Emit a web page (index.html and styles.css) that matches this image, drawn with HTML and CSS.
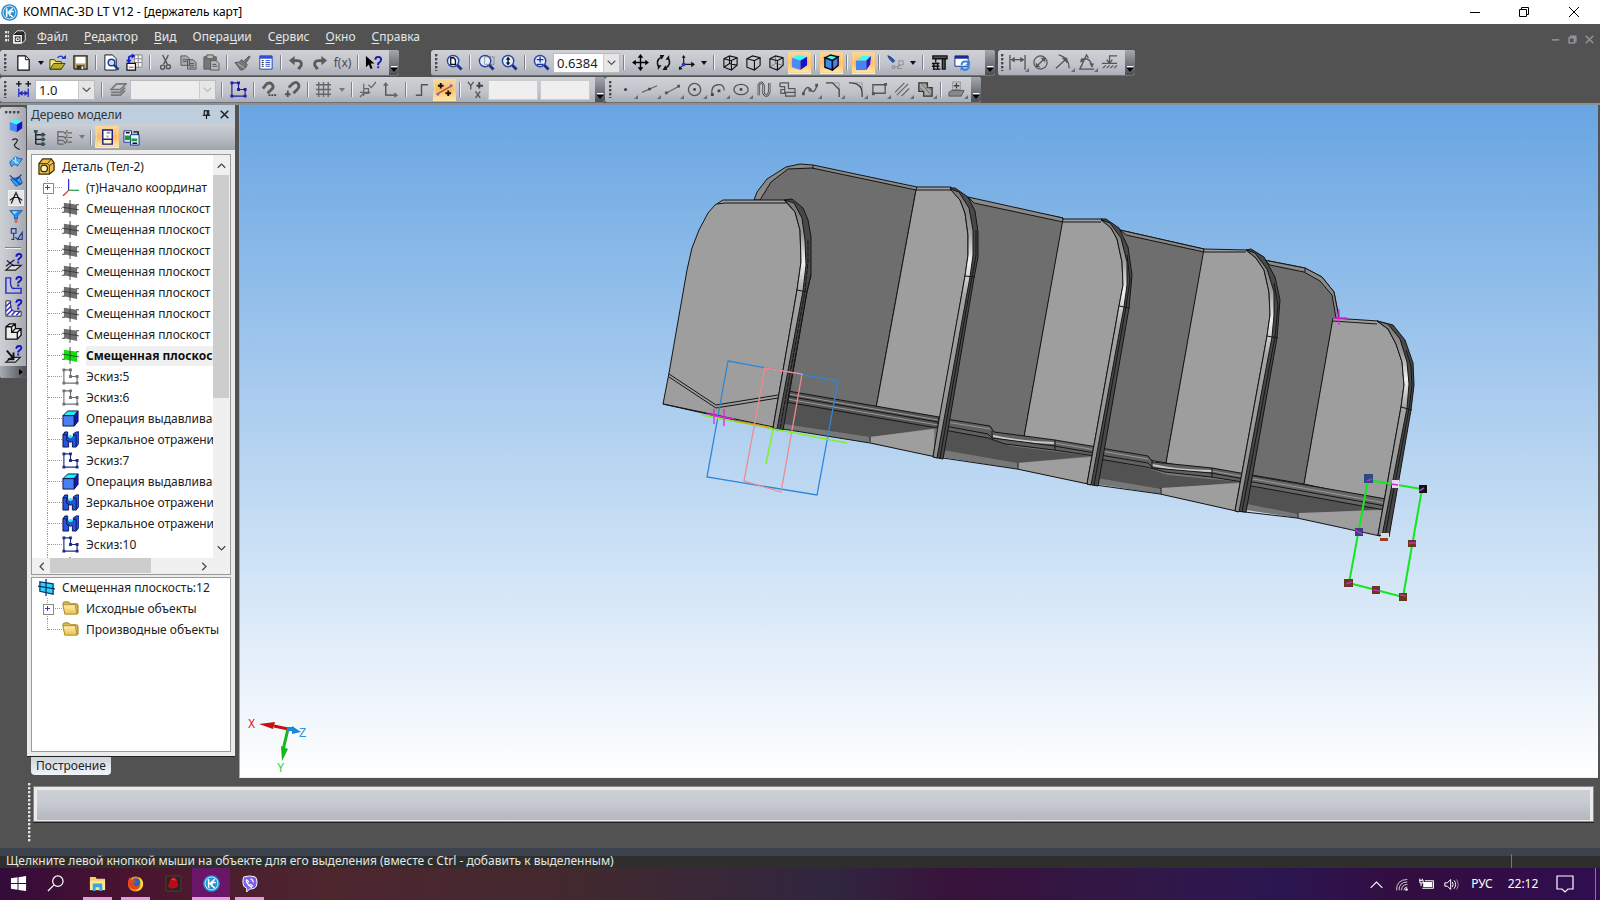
FILE: index.html
```html
<!DOCTYPE html>
<html lang="ru">
<head>
<meta charset="utf-8">
<title>КОМПАС-3D LT V12 - [держатель карт]</title>
<link rel="stylesheet" href="styles.css">
</head>
<body>
<svg class="defs" aria-hidden="true">
<defs>
<linearGradient id="g-rim" x1="0" y1="0" x2="0" y2="1"><stop offset="0" stop-color="#777"/><stop offset=".15" stop-color="#999"/><stop offset=".27" stop-color="#f2f2f2"/><stop offset=".4" stop-color="#a5a5a5"/><stop offset="1" stop-color="#8c8c8c"/></linearGradient>
<linearGradient id="g-folder" x1="0" y1="0" x2="0" y2="1"><stop offset="0" stop-color="#fff2b0"/><stop offset="1" stop-color="#e8bf4f"/></linearGradient>
<g id="lens"><path d="M11.500 11.500l5 5" stroke="#1b2f94" stroke-width="3"/><circle cx="7.500" cy="7.500" r="6" fill="#dff0fb" stroke="#2c43a8" stroke-width="1.500"/></g>
</defs>
<symbol id="i-kompas" viewBox="0 0 18 18"><circle cx="9" cy="9" r="8.800" fill="#2b8fd3"/><circle cx="9" cy="9" r="6.800" fill="none" stroke="#d8ecfa" stroke-width="1"/><path d="M6 4.500v9M12.500 4.500L7.500 9M7 8.500l5.500 5.500M9.500 8h4M9.500 8v4.500" stroke="#fff" stroke-width="1.700" fill="none"/></symbol>
<symbol id="i-part" viewBox="0 0 18 18"><path d="M3 6l4-4h7l2 3v8l-4 3H3z" fill="#333" stroke="#eee"/><path d="M3 6h9v10M12 6l3-3" stroke="#111" fill="none"/><rect x="3.500" y="7.500" width="8" height="8" fill="#333" stroke="#fff" stroke-width="1.500"/><circle cx="7.500" cy="11.500" r="1.700" fill="none" stroke="#fff" stroke-width="1.300"/></symbol>
<symbol id="i-new" viewBox="0 0 18 18"><path d="M3 2h8l4 4v11H3z" fill="#fff" stroke="#111" stroke-width="1.300"/><path d="M11 2v4h4" fill="#ddd" stroke="#111"/></symbol>
<symbol id="i-open" viewBox="0 0 18 18"><path d="M1 16V6h5l1 2h6v8z" fill="#ffee75" stroke="#3b3b05"/><path d="M1 16l4-6h12l-4 6z" fill="#b8ae31" stroke="#3b3b05"/><path d="M9 4q4-4 7 1" fill="none" stroke="#1638c8" stroke-width="1.500"/><path d="M13 5h5V1z" fill="#1638c8"/></symbol>
<symbol id="i-save" viewBox="0 0 18 18"><path d="M2 2h14v14H3l-1-1z" fill="#b5a265" stroke="#222" stroke-width="1.300"/><path d="M4 3h10v7H4z" fill="#fff"/><path d="M5 12h8v4H5z" fill="#333"/><path d="M10 13h2v3h-2z" fill="#eee"/></symbol>
<symbol id="i-preview" viewBox="0 0 18 18"><path d="M2 1h8l4 4v12H2z" fill="#fff" stroke="#111"/><circle cx="9" cy="9" r="3.500" fill="#cde" stroke="#173a9c" stroke-width="1.500"/><path d="M11.500 11.500l5 5" stroke="#173a9c" stroke-width="2.500"/></symbol>
<symbol id="i-insert" viewBox="0 0 18 18"><path d="M9 1h8v13H9zM13 1v13M9 5h8M9 9h8" fill="#f4f4f4" stroke="#888"/><path d="M1 10h9v7H1z" fill="#fff" stroke="#111" stroke-width="1.300"/><path d="M3 14h5" stroke="#d22"/><path d="M3 9V4q0-2 4-2" stroke="#1a22d0" stroke-width="2" fill="none"/><path d="M6-1l4 3-4 3zM0 6h6L3 10z" fill="#1a22d0"/></symbol>
<symbol id="i-cut" viewBox="0 0 18 18"><path d="M6 1l5 10M12 1L7 11" stroke="#555" stroke-width="1.500"/><circle cx="6" cy="14" r="2.200" fill="none" stroke="#555" stroke-width="1.500"/><circle cx="12" cy="13.500" r="2.200" fill="none" stroke="#555" stroke-width="1.500"/></symbol>
<symbol id="i-copy" viewBox="0 0 18 18"><path d="M1 2h6l3 3v7H1zM8 6h6l3 3v7H8z" fill="#a9abb0" stroke="#555"/><path d="M3 6h5M3 8h4M10 10h5M10 12h5M10 14h5" stroke="#555"/></symbol>
<symbol id="i-paste" viewBox="0 0 18 18"><path d="M1 3h13v13H1z" fill="#777" stroke="#555"/><path d="M4 1h7v4H4z" fill="#bbb" stroke="#555"/><path d="M8 7h6l3 3v7H8z" fill="#b5b7bb" stroke="#555"/><path d="M10 11h4M10 13h5" stroke="#555"/></symbol>
<symbol id="i-brush" viewBox="0 0 18 18"><path d="M11 7l5-5 1 1-4 6z" fill="#777" stroke="#555"/><path d="M1 9q6 0 7-3l6 5q-2 6-7 6z" fill="#777" stroke="#555"/><path d="M4 10l7 5" stroke="#bbb"/></symbol>
<symbol id="i-props" viewBox="0 0 18 18"><path d="M3 2h13v14H3z" fill="#fff" stroke="#1f3bb0"/><path d="M3 2h13v3H3z" fill="#2d50d8"/><path d="M5 7h2M5 9h2M5 11h2M5 13h2" stroke="#111"/><path d="M9 7h5M9 9h5M9 11h5M9 13h5" stroke="#2d50d8"/></symbol>
<symbol id="i-undo" viewBox="0 0 18 18"><path d="M5 7h5q5 0 4 5l-3 4" fill="none" stroke="#5a5a5a" stroke-width="3"/><path d="M1 7l6-5v10z" fill="#5a5a5a"/></symbol>
<symbol id="i-redo" viewBox="0 0 18 18"><path d="M13 7H8Q3 7 4 12l3 4" fill="none" stroke="#5a5a5a" stroke-width="3"/><path d="M17 7l-6-5v10z" fill="#5a5a5a"/></symbol>
<symbol id="i-help" viewBox="0 0 18 18"><path d="M1 2v12l3-3 2 5 2-1-2-5h4z" fill="#000"/><path d="M11 6q0-3 3-3t3 3q0 2-3 4v2" fill="none" stroke="#1717a0" stroke-width="2"/><path d="M13 13h2v2h-2z" fill="#1717a0"/></symbol>
<symbol id="i-zpage" viewBox="0 0 18 18"><use href="#lens"/><path d="M5 4h3l2 2v5H5z" fill="#fff" stroke="#111" stroke-width="1.400"/></symbol>
<symbol id="i-zwin" viewBox="0 0 18 18"><use href="#lens"/><path d="M7 3h10v8H7z" fill="none" stroke="#555" stroke-dasharray="1 1"/></symbol>
<symbol id="i-zfit" viewBox="0 0 18 18"><use href="#lens"/><path d="M7.500 4v7" stroke="#111" stroke-width="1.500"/><path d="M5 6l2.500-3L10 6zM5 9l2.500 3L10 9z" fill="#111"/></symbol>
<symbol id="i-zpm" viewBox="0 0 18 18"><use href="#lens"/><path d="M4 6h7M7.500 3v6M4 11h7" stroke="#1b2f94" stroke-width="1.400"/></symbol>
<symbol id="i-move" viewBox="0 0 18 18"><path d="M9 3v12M3 9h12" stroke="#000" stroke-width="1.500"/><path d="M6 4l3-4 3 4zM6 14l3 4 3-4zM4 6L0 9l4 3zM14 6l4 3-4 3z"/></symbol>
<symbol id="i-rot" viewBox="0 0 18 18"><path d="M4 14Q0 7 7 3M14 4q4 7-3 11" fill="none" stroke="#111" stroke-width="1.700"/><path d="M5 1h5L7 6zM13 17H8l3-5zM15 1v5h-4zM3 17v-5h4z" fill="#111"/></symbol>
<symbol id="i-axes" viewBox="0 0 18 18"><path d="M6 11V3M6 11h10M6 11l-4 4" stroke="#111" stroke-width="1.200"/><path d="M4 4l2-3 2 3zM14 8l4 3-4 3zM1 17v-4l4 3z" fill="#111"/><circle cx="6" cy="11" r="2" fill="#23d"/></symbol>
<symbol id="i-wire" viewBox="0 0 18 18"><path d="M2 5l6-3 8 2v8l-6 5-8-3zM2 5l8 2v10M10 7l6-3M8 2v8l8 2M8 10l-6 4" fill="none" stroke="#111" stroke-width="1.200"/></symbol>
<symbol id="i-hid" viewBox="0 0 18 18"><path d="M2 5l6-3 8 2v8l-6 5-8-3zM2 5l8 2v10M10 7l6-3" fill="none" stroke="#111" stroke-width="1.200"/></symbol>
<symbol id="i-hid2" viewBox="0 0 18 18"><path d="M8 2v8l8 2M8 10l-6 4" fill="none" stroke="#777"/><path d="M2 5l6-3 8 2v8l-6 5-8-3zM2 5l8 2v10M10 7l6-3" fill="none" stroke="#111" stroke-width="1.200"/></symbol>
<symbol id="i-shade" viewBox="0 0 18 18"><path d="M1 4l7-3 9 2-7 4z" fill="#3ff"/><path d="M1 4l9 3v10l-9-3z" fill="#4a8cf5"/><path d="M10 7l7-4v9l-7 5z" fill="#1414c8"/></symbol>
<symbol id="i-edges" viewBox="0 0 18 18"><g stroke="#0a0a20" stroke-width="1.500"><path d="M2 4l6-3 8 2-6 4z" fill="#3fe"/><path d="M2 4l8 3v10l-8-3z" fill="#3d8ceb"/><path d="M10 7l6-4v9l-6 5z" fill="#4b7fe0"/></g></symbol>
<symbol id="i-persp" viewBox="0 0 18 18"><path d="M1 7l7-5h9l-5 5z" fill="#3ff"/><path d="M1 7h11v10H1z" fill="#4a82f5"/><path d="M12 7l5-5-1 9-4 6z" fill="#1518d8"/></symbol>
<symbol id="i-dep" viewBox="0 0 20 18"><path d="M1 1l4 2 4 4-2 2-4-4z" fill="#1b5cc0" stroke="#0d3470"/><path d="M14 7h5v5h-5zM6 13h3v3H6zM9 14h4l2-3M15 12l-3 4h6" fill="none" stroke="#888"/></symbol>
<symbol id="i-lib" viewBox="0 0 18 18"><path d="M2 2h15v3H2zM12 5h3v11h-3zM5 5v4" stroke="#111" fill="#555" stroke-width="1.400"/><path d="M1 10h8M1 13h8M2 16h8M3 9v8M7 9v8" stroke="#111" stroke-width="1.500"/></symbol>
<symbol id="i-refresh" viewBox="0 0 18 18"><path d="M1 2h14v11H1z" fill="#fff" stroke="#1a2a90"/><path d="M1 2h14v3H1z" fill="#1a2a90"/><path d="M8 12q0-4 4-4t4 2M16 13q-1 4-5 4l-3-2" stroke="#2e86e8" stroke-width="2" fill="none"/><path d="M17 7v5h-5zM7 18v-5h4z" fill="#2e86e8"/></symbol>
<symbol id="i-dim" viewBox="0 0 18 18"><path d="M1 1v16M17 1v16M2 6h14" stroke="#555" stroke-width="1.400"/><path d="M2 6l4-3v6zM16 6l-4-3v6z" fill="#555"/></symbol>
<symbol id="i-diam" viewBox="0 0 18 18"><circle cx="9" cy="9" r="7" fill="none" stroke="#555" stroke-width="1.300"/><path d="M5 13l8-8" stroke="#555" stroke-width="1.300"/><path d="M14 4v5L9 4zM4 14V9l5 5z" fill="#555"/></symbol>
<symbol id="i-rad" viewBox="0 0 18 18"><path d="M4 1q11 3 11 14M1 15L11 6" fill="none" stroke="#555" stroke-width="1.400"/><path d="M13 4v6L7 4z" fill="#555"/></symbol>
<symbol id="i-ang" viewBox="0 0 18 18"><path d="M1 16h16M2 16L9 1l2 3M3 6q10-4 12 8" fill="none" stroke="#555" stroke-width="1.400"/><path d="M6 8l-4 1 2-5zM12 10l5 0-2 4z" fill="#555"/></symbol>
<symbol id="i-lvl" viewBox="0 0 18 18"><path d="M1 10h16M9 10V2h8M6 6l3 4 3-4M2 15l3-3M6 15l3-3M10 15l3-3M14 15l3-3" fill="none" stroke="#555" stroke-width="1.300"/></symbol>
<symbol id="i-step" viewBox="0 0 18 18"><path d="M4 0v6M1 3h6M14 0v6M11 3h6" stroke="#111" stroke-width="1.400"/><path d="M4 8v9M14 8v9M5 13h8" stroke="#2326c8" stroke-width="1.400"/><path d="M4 13l4-3v6zM14 13l-4-3v6z" fill="#2326c8"/></symbol>
<symbol id="i-layers" viewBox="0 0 18 18"><path d="M1 15h10l5-5M1 12h10l5-5M1 9h10l6-6H7z" fill="none" stroke="#777" stroke-width="1.700"/></symbol>
<symbol id="i-sketch" viewBox="0 0 18 18"><path d="M2 2h7v7h7v7H2z" fill="none" stroke="currentColor" stroke-width="1.200"/><path d="M.5.500h3v3h-3zM7.500.500h3v3h-3zM7.500 7.500h3v3h-3zM14.500 7.500h3v3h-3zM14.500 14.500h3v3h-3zM.5 14.500h3v3h-3z" fill="currentColor"/></symbol>
<symbol id="i-snap" viewBox="0 0 18 18"><path d="M2 8l4-5q4-2 6 1 2 3-1 5l-4 4" fill="none" stroke="#5c5c5c" stroke-width="3"/><path d="M11 15h2M14 15h2M8 15h2" stroke="#444" stroke-width="2"/></symbol>
<symbol id="i-mag" viewBox="0 0 18 18"><path d="M5 7l4-4q4-3 6 0 2 3-1 6l-4 4" fill="none" stroke="#5c5c5c" stroke-width="3"/><path d="M4 10v7M1 14h6" stroke="#555" stroke-width="2"/></symbol>
<symbol id="i-grid" viewBox="0 0 18 18"><path d="M4 1v16M9 1v16M14 1v16M1 4h16M1 9h16M1 14h16" stroke="#666" stroke-width="1.400"/></symbol>
<symbol id="i-orth" viewBox="0 0 18 18"><path d="M5 3v13M1 12h11M1 17l5-5M5 8h5v5H5M10 4l3 3 5-6" fill="none" stroke="#666" stroke-width="1.300"/></symbol>
<symbol id="i-lcs" viewBox="0 0 18 18"><path d="M4 4v11h11" fill="none" stroke="#444" stroke-width="1.300"/><path d="M1 5l3-4 3 4zM13 12l4 3-4 3z" fill="#666"/></symbol>
<symbol id="i-ort" viewBox="0 0 18 18"><path d="M3 15h6V4h7" fill="none" stroke="#555" stroke-width="1.500"/></symbol>
<symbol id="i-round" viewBox="0 0 18 18"><path d="M1 14l16-9" stroke="#a55a4a" stroke-width="1.500"/><path d="M5 2v6M2 5h6M13 10v6M10 13h6" stroke="#111" stroke-width="2"/><circle cx="2" cy="14" r="1.500" fill="#86a"/><circle cx="16" cy="5" r="1.500" fill="#86a"/></symbol>
<symbol id="i-xy" viewBox="0 0 18 18"><path d="M1 1l3 4 3-4M4 5v4M9 11l5 7M14 11l-5 7" fill="none" stroke="#555" stroke-width="1.400"/><path d="M13 1v7M10 5h7" stroke="#444" stroke-width="2"/></symbol>
<symbol id="i-pt" viewBox="0 0 18 18"><circle cx="8" cy="9" r="1.700" fill="#444"/></symbol>
<symbol id="i-ln" viewBox="0 0 18 18"><path d="M1 12l16-7" stroke="#666" stroke-width="1.300"/><circle cx="9" cy="8.500" r="1.600" fill="#444"/></symbol>
<symbol id="i-seg" viewBox="0 0 18 18"><path d="M2 13l13-7" stroke="#666" stroke-width="1.300"/><path d="M1 11h3v3H1zM14 4h3v3h-3z" fill="#555"/></symbol>
<symbol id="i-circ" viewBox="0 0 18 18"><circle cx="8" cy="9" r="6.500" fill="none" stroke="#555" stroke-width="1.400"/><circle cx="8" cy="9" r="1.500" fill="#444"/></symbol>
<symbol id="i-arc" viewBox="0 0 18 18"><path d="M2 14Q1 5 8 4t7 6" fill="none" stroke="#555" stroke-width="1.400"/><path d="M1 13h3v3H1zM8 9h3v3H8z" fill="#444"/></symbol>
<symbol id="i-ell" viewBox="0 0 18 18"><ellipse cx="8.500" cy="9" rx="7.500" ry="5.500" fill="none" stroke="#555" stroke-width="1.400"/><circle cx="8.500" cy="9" r="1.500" fill="#444"/></symbol>
<symbol id="i-nurb" viewBox="0 0 18 18"><path d="M3 15V4q3-5 5 1v8q3 6 6-1V2" fill="none" stroke="#444" stroke-width="2.600"/><path d="M3 15V4q3-5 5 1v8q3 6 6-1V2" fill="none" stroke="#ccc" stroke-width=".9"/></symbol>
<symbol id="i-multi" viewBox="0 0 18 18"><path d="M1 2h9v6h7M1 6h5v6h11M1 2v4M6 9H2v4h5v3h10v-8" fill="none" stroke="#555" stroke-width="1.300"/></symbol>
<symbol id="i-spl" viewBox="0 0 18 18"><path d="M1 14q4-11 8-5t7-5" fill="none" stroke="#555" stroke-width="1.400"/><path d="M0 12h3v3H0zM7 8h3v3H7zM14 3h3v3h-3z" fill="#555"/></symbol>
<symbol id="i-cham" viewBox="0 0 18 18"><path d="M1 2h7l7 7v8" fill="none" stroke="#444" stroke-width="1.400"/><path d="M8 2h7v7" fill="none" stroke="#666" stroke-dasharray="1 1"/></symbol>
<symbol id="i-fil" viewBox="0 0 18 18"><path d="M1 2h3q11 1 11 11v4" fill="none" stroke="#444" stroke-width="1.400"/><path d="M6 2h9v7" fill="none" stroke="#666" stroke-dasharray="1 1"/></symbol>
<symbol id="i-rect" viewBox="0 0 18 18"><path d="M2 4h13v9H2z" fill="none" stroke="#555" stroke-width="1.400"/><path d="M1 12h3v3H1zM14 2h3v3h-3z" fill="#555"/></symbol>
<symbol id="i-hatch" viewBox="0 0 18 18"><path d="M1 12L11 2M3 15L15 3M8 16l8-8" stroke="#666" stroke-width="1.300"/></symbol>
<symbol id="i-eq" viewBox="0 0 18 18"><path d="M2 2h9v5h5v9H7v-5H2z" fill="#aaa" stroke="#333" stroke-width="1.400"/><path d="M2 6l5 5M5 3l10 12M8 2l8 9M7 14l2 2" stroke="#666"/></symbol>
<symbol id="i-proj" viewBox="0 0 18 18"><path d="M1 12l3-2h13l-3 6H1z" fill="#888" stroke="#555"/><path d="M5 1h8v8H5z" fill="none" stroke="#555" stroke-dasharray="1 1"/><path d="M9 2v6M6 5h6" stroke="#444" stroke-width="1.400"/></symbol>
<symbol id="i-curve" viewBox="0 0 18 18"><path d="M4 4q4-3 7 0-1 3-4 6 0 4 7 6" fill="none" stroke="#222" stroke-width="1.500"/></symbol>
<symbol id="i-surf" viewBox="0 0 18 18"><path d="M1 9l7-7 4 2 5 1-6 9-4-2-4 3z" fill="#4aa8ee" stroke="#1a4ca8"/><path d="M8 2l1 9M4 6l9 5" stroke="#dff"/></symbol>
<symbol id="i-surf2" viewBox="0 0 18 18"><path d="M2 8l7 9 8-4-3-8z" fill="#35a0ee" stroke="#1438a0"/><path d="M1 3l14 12M8 10l8-8" stroke="#1438a0" stroke-width="1.500"/></symbol>
<symbol id="i-compass" viewBox="0 0 18 18"><path d="M9 1v3M3 16L8 4h2l5 12M1 12q8-8 16 0" fill="none" stroke="#111" stroke-width="1.500"/></symbol>
<symbol id="i-filter" viewBox="0 0 18 18"><path d="M1 2h16l-6 7v4H7V9z" fill="#258fe8" stroke="#1a52a8"/><path d="M4 3h7l-4 4z" fill="#9df"/><circle cx="9" cy="16" r="1.800" fill="#e5552a"/></symbol>
<symbol id="i-spec" viewBox="0 0 18 18"><path d="M3 2h6v6H3zM6 8v8M3 16h4M8 13l3 3 6-9v9h-6" fill="none" stroke="#1c3c90" stroke-width="1.500"/></symbol>
<symbol id="i-q1" viewBox="0 0 20 20"><path d="M2 18h10l6-5H8z" fill="#ddd" stroke="#222" stroke-width="1.300"/><path d="M3 8l8 6M2 14l9-7" stroke="#1a1a50" stroke-width="1.300"/><path d="M13 4q0-3 3-3t2 3l-3 3v1M14 10h2" fill="none" stroke="#1516c0" stroke-width="2"/></symbol>
<symbol id="i-q2" viewBox="0 0 20 20"><path d="M2 2h5q-1 12 4 11h7v5H2z" fill="none" stroke="#2a2ac8" stroke-width="1.500"/><path d="M13 4q0-3 3-3t2 3l-3 3v1M14 10h2" fill="none" stroke="#1516c0" stroke-width="2"/></symbol>
<symbol id="i-q3" viewBox="0 0 20 20"><path d="M2 2h5q-1 11 4 11h7v5H2z" fill="#fff" stroke="#222"/><path d="M2 8l5-5M2 13l6-6M3 17l6-6M8 17l4-4M13 17l4-4" stroke="#2a2ac8" stroke-width="1.500"/><path d="M13 4q0-3 3-3t2 3l-3 3v1M14 10h2" fill="none" stroke="#1516c0" stroke-width="2"/></symbol>
<symbol id="i-solid" viewBox="0 0 20 20"><path d="M2 5l4-3h6v5h6v7l-4 4H2zM2 5h6v6h6v7M8 5l4-3M8 11l4-4M14 11l4-4" fill="#eee" stroke="#111" stroke-width="1.400"/></symbol>
<symbol id="i-q4" viewBox="0 0 20 20"><path d="M2 18h10l5-5H8z" fill="#ddd" stroke="#222" stroke-width="1.300"/><path d="M3 6l7 8M10 8v7H4" stroke="#111" stroke-width="2" fill="none"/><path d="M13 4q0-3 3-3t2 3l-3 3v1M14 10h2" fill="none" stroke="#1516c0" stroke-width="2"/></symbol>
<symbol id="i-tree" viewBox="0 0 18 18"><path d="M4 2v14M4 6h6M4 11h6M4 16h6M10 6h4M10 11h4M10 16h4" stroke="#222" stroke-width="1.500"/><path d="M2 1h4v3H2zM10 4h3v4h-3zM10 9h3v4h-3zM10 14h3v4h-3z" fill="#355"/></symbol>
<symbol id="i-list" viewBox="0 0 18 18"><path d="M2 2v14M2 3h6M2 8h6M2 12h6M2 16h6M12 4h5M12 9h5M12 14h5M8 3l2 2 2-4M8 8l2 2 2-4M8 13l2 2 2-4" fill="none" stroke="#666" stroke-width="1.300"/></symbol>
<symbol id="i-doc" viewBox="0 0 18 18"><path d="M4 1h10v10H4z" fill="#fff" stroke="#1a1a80" stroke-width="1.500"/><path d="M4 11h10v5H4z" fill="#fff6d0" stroke="#1a1a80" stroke-width="1.500"/><path d="M8 3h4v2H8zM8 7h2v2H8z" fill="#999"/></symbol>
<symbol id="i-docs" viewBox="0 0 18 18"><path d="M1 2h8v12H1z" fill="#fff" stroke="#1a2a90"/><path d="M8 6h9v11H8z" fill="#dff" stroke="#1a2a90"/><path d="M2 7h6v5H2zM9 10h6v3H9z" fill="#1d9a3a"/><path d="M11 3h5v3M3 4h4M10 15h5" stroke="#111" stroke-width="1.500" fill="none"/></symbol>
<symbol id="i-root" viewBox="0 0 18 18"><path d="M1 6l4-5h9l3 4v8l-5 4H1z" fill="#f2c04b" stroke="#3a2a05" stroke-width="1.300"/><path d="M1 6h9l2 2v9M10 6l4-5M12 8l5-3" fill="none" stroke="#3a2a05"/><circle cx="6.500" cy="11" r="3.500" fill="#fff3c0" stroke="#3a2a05" stroke-width="1.300"/></symbol>
<symbol id="i-origin" viewBox="0 0 18 18"><path d="M7 12V0" stroke="#33c" stroke-width="1.300"/><path d="M7 12h11" stroke="#2a9a50" stroke-width="1.300"/><path d="M7 12l-6 6" stroke="#c33" stroke-width="1.300"/></symbol>
<symbol id="i-plane" viewBox="0 0 18 18"><path d="M2 3l14 2v11L2 13z" fill="currentColor"/><path d="M8.500 0v18M0 7.500l18 3M0 13h3M15 5h3" stroke="#333" stroke-width=".9" fill="none"/></symbol>
<symbol id="i-plane2" viewBox="0 0 18 18"><path d="M2 3l14 2v11L2 13z" fill="#2fd3f7" stroke="#0b3c78" stroke-width="1.400"/><path d="M8.500 0v18M0 7.500l18 3" stroke="#0b2c68" stroke-width="1.300"/></symbol>
<symbol id="i-ext" viewBox="0 0 18 18"><g stroke="#0a1450"><path d="M1 6l5-5h11l-4 5z" fill="#1ff0f5"/><path d="M1 6h12v11H1z" fill="#4a80f5"/><path d="M13 6l4-5v11l-4 5z" fill="#1212d0"/></g></symbol>
<symbol id="i-mir" viewBox="0 0 18 18"><g stroke="#0a1450"><path d="M1 4l2-3h3v5l3 2 3-2V3l3-2h3v12l-3 4h-4v-6l-2 1-2-1v6H1z" fill="#2454e0"/><path d="M1 4h4v6l3 1" fill="none"/><path d="M12 5l3-1v12" fill="none"/><path d="M6 6l3 2 3-2-3-2z" fill="#1ff0f5" stroke="none"/></g></symbol>
<symbol id="i-folder" viewBox="0 0 18 18"><path d="M1 4q0-2 2-2h4l2 2h6q2 0 2 2v8H3z" fill="#e2b94a" stroke="#9a7520"/><path d="M1 5h13l2 10H3z" fill="url(#g-folder)" stroke="#b08b30"/></symbol>
<symbol id="i-down" viewBox="0 0 12 12"><path d="M1 3l5 5 5-5" fill="none" stroke="currentColor" stroke-width="1.600"/></symbol>
<symbol id="i-pin" viewBox="0 0 12 12"><path d="M3 1h6v6H3zM7 1v6M1 7h10M6 7v5" fill="none" stroke="#000" stroke-width="1.400"/></symbol>
<symbol id="i-x" viewBox="0 0 12 12"><path d="M1 1l10 10M11 1L1 11" stroke="currentColor" fill="none"/></symbol>
<symbol id="i-min" viewBox="0 0 12 12"><path d="M1 6.500h10" stroke="currentColor"/></symbol>
<symbol id="i-max" viewBox="0 0 12 12"><path d="M1.500 3.500h7v7h-7zM3.500 3.500v-2h7v7h-2" fill="none" stroke="currentColor"/></symbol>
<symbol id="i-win" viewBox="0 0 18 18"><path d="M1 3.500l7-1v6H1zM9 2.300L17 1v7.500H9zM1 9.500h7v6l-7-1zM9 9.500h8V17l-8-1.200z" fill="#fff"/></symbol>
<symbol id="i-search" viewBox="0 0 18 18"><circle cx="11.500" cy="6.500" r="5.500" fill="none" stroke="#fff" stroke-width="1.300"/><path d="M7.500 10.500L1 17" stroke="#fff" stroke-width="1.300"/></symbol>
<symbol id="i-exp" viewBox="0 0 18 18"><path d="M1 2h6l1 2h9v12H1z" fill="#f3cf68"/><path d="M1 6h16v10H1z" fill="#fbe49b"/><path d="M4 17V9h10v8h-3v-4H7v4z" fill="#39a5d8"/></symbol>
<symbol id="i-ff" viewBox="0 0 18 18"><circle cx="9" cy="9.500" r="8" fill="#f58a1f"/><path d="M13 2q5 4 4 9-2 6-8 6 7-4 5-9z" fill="#ffd83a"/><circle cx="9.500" cy="8" r="4.500" fill="#2467b5"/><path d="M1 6q0 10 8 9 5-1 5-4-3 2-6 0-2-2 0-3l2-1Q8 4 5 6L3 2z" fill="#e8421c"/></symbol>
<symbol id="i-red" viewBox="0 0 18 18"><rect x="1" y="1" width="16" height="16" rx="1" fill="#2c2222" stroke="#5a3a3e"/><path d="M6 4q3-3 6 0l2 6q0 4-5 4-5 1-6-2z" fill="#b80c18"/><path d="M7 5q3-2 5 1" stroke="#f44" fill="none"/></symbol>
<symbol id="i-viber" viewBox="0 0 18 18"><path d="M3 2q6-2 12 0 2 1 2 6 0 5-3 6-3 1-5 1l-3 3v-4q-4-1-4-6 0-5 1-6z" fill="#7d5fe8" stroke="#fff"/><path d="M6 5q-1 1 0 3 2 4 5 5l1-2-2-1-1 1q-2-1-2-3l1-1zM10 4q3 1 3 4" fill="none" stroke="#fff" stroke-width="1.100"/></symbol>
<symbol id="i-up" viewBox="0 0 18 18"><path d="M2 13l7-7 7 7" fill="none" stroke="#fff" stroke-width="1.300"/></symbol>
<symbol id="i-wifi" viewBox="0 0 18 18"><path d="M3 16Q3 3 16 3M6 16Q6 6 16 6M9 16q0-7 7-7M12 16q0-4 4-4" fill="none" stroke="#cfc5d6" stroke-width="1.200"/><circle cx="15" cy="15" r="1.500" fill="#fff"/></symbol>
<symbol id="i-bat" viewBox="0 0 18 18"><path d="M5 6h11v6H5z" fill="#fff"/><path d="M4 13.500h13.500v-9H7M18 7v4M0 4h5v3H1V4M1 2v2M4 2v2M2.500 7v4" stroke="#fff" fill="none" stroke-width="1.200"/></symbol>
<symbol id="i-vol" viewBox="0 0 18 18"><path d="M1 7h3l4-4v12l-4-4H1zM10 6q2 3 0 6M12 4q4 5 0 10" fill="none" stroke="#fff" stroke-width="1.200"/><path d="M15 3q4 6 0 12" fill="none" stroke="#a79bb0"/></symbol>
<symbol id="i-note" viewBox="0 0 18 18"><path d="M1 1h16v13h-5l-3 3-3-3H1z" fill="none" stroke="#fff" stroke-width="1.200"/></symbol>
</svg>

<header class="titlebar">
  <svg class="ico"><use href="#i-kompas"/></svg>
  <h1 class="title">КОМПАС-3D LT V12 - [держатель карт]</h1>
  <div class="winbtns">
    <button aria-label="Свернуть"><svg><use href="#i-min"/></svg></button>
    <button aria-label="Восстановить"><svg><use href="#i-max"/></svg></button>
    <button aria-label="Закрыть"><svg><use href="#i-x"/></svg></button>
  </div>
</header>

<nav class="menubar">
  <span class="grip"></span>
  <svg class="ico"><use href="#i-part"/></svg>
  <button><u>Ф</u>айл</button><button><u>Р</u>едактор</button><button><u>В</u>ид</button><button>Опера<u>ц</u>ии</button><button>С<u>е</u>рвис</button><button><u>О</u>кно</button><button><u>С</u>правка</button>
  <div class="docbtns">
    <button aria-label="Свернуть документ"><svg><use href="#i-min"/></svg></button>
    <button aria-label="Восстановить документ"><svg><use href="#i-max"/></svg></button>
    <button aria-label="Закрыть документ"><svg><use href="#i-x"/></svg></button>
  </div>
</nav>

<div class="tools">
<div class="toolrow">
  <div class="toolbar std">
    <span class="grip"></span>
    <button class="tb" aria-label="Создать"><svg><use href="#i-new"/></svg></button><button class="dd" aria-label="Варианты создания"></button>
    <button class="tb" aria-label="Открыть"><svg><use href="#i-open"/></svg></button>
    <button class="tb" aria-label="Сохранить"><svg><use href="#i-save"/></svg></button><i class="sep"></i>
    <button class="tb" aria-label="Просмотр"><svg><use href="#i-preview"/></svg></button>
    <button class="tb" aria-label="Вставка"><svg><use href="#i-insert"/></svg></button><i class="sep"></i>
    <button class="tb" aria-label="Вырезать"><svg><use href="#i-cut"/></svg></button>
    <button class="tb" aria-label="Копировать"><svg><use href="#i-copy"/></svg></button>
    <button class="tb" aria-label="Вставить"><svg><use href="#i-paste"/></svg></button><i class="sep"></i>
    <button class="tb" aria-label="Копировать свойства"><svg><use href="#i-brush"/></svg></button>
    <button class="tb" aria-label="Свойства"><svg><use href="#i-props"/></svg></button><i class="sep"></i>
    <button class="tb" aria-label="Отменить"><svg><use href="#i-undo"/></svg></button>
    <button class="tb" aria-label="Повторить"><svg><use href="#i-redo"/></svg></button>
    <button class="tb fx">f(x)</button><i class="sep"></i>
    <button class="tb" aria-label="Справка"><svg><use href="#i-help"/></svg></button>
    <button class="more" aria-label="Ещё"></button>
  </div>
  <div class="toolbar view">
    <span class="grip"></span>
    <button class="tb" aria-label="Показать все"><svg><use href="#i-zpage"/></svg></button><i class="sep"></i>
    <button class="tb" aria-label="Рамкой"><svg><use href="#i-zwin"/></svg></button>
    <button class="tb" aria-label="Масштаб"><svg><use href="#i-zfit"/></svg></button><i class="sep"></i>
    <button class="tb" aria-label="Приблизить"><svg><use href="#i-zpm"/></svg></button>
    <span class="combo zoom"><select aria-label="Масштаб изображения"><option>0.6384</option></select><svg><use href="#i-down"/></svg></span><i class="sep"></i>
    <button class="tb" aria-label="Сдвинуть"><svg><use href="#i-move"/></svg></button>
    <button class="tb" aria-label="Повернуть"><svg><use href="#i-rot"/></svg></button>
    <button class="tb" aria-label="Ориентация"><svg><use href="#i-axes"/></svg></button><button class="dd" aria-label="Список ориентаций"></button><i class="sep"></i>
    <button class="tb" aria-label="Каркас"><svg><use href="#i-wire"/></svg></button>
    <button class="tb" aria-label="Без невидимых линий"><svg><use href="#i-hid"/></svg></button>
    <button class="tb" aria-label="Тонкие невидимые"><svg><use href="#i-hid2"/></svg></button>
    <button class="tb on" aria-label="Полутоновое"><svg><use href="#i-shade"/></svg></button><i class="sep"></i>
    <button class="tb on" aria-label="С каркасом"><svg><use href="#i-edges"/></svg></button><i class="sep"></i>
    <button class="tb on" aria-label="Перспектива"><svg><use href="#i-persp"/></svg></button><i class="sep"></i>
    <button class="tb" aria-label="Упрощения"><svg><use href="#i-dep"/></svg></button><button class="dd" aria-label="Список упрощений"></button><i class="sep"></i>
    <button class="tb" aria-label="Библиотека"><svg><use href="#i-lib"/></svg></button>
    <button class="tb" aria-label="Обновить"><svg><use href="#i-refresh"/></svg></button>
    <button class="more" aria-label="Ещё"></button>
  </div>
  <div class="toolbar dims">
    <span class="grip"></span>
    <button class="tb fly" aria-label="Линейный размер"><svg><use href="#i-dim"/></svg></button>
    <button class="tb" aria-label="Диаметр"><svg><use href="#i-diam"/></svg></button>
    <button class="tb fly" aria-label="Радиус"><svg><use href="#i-rad"/></svg></button>
    <button class="tb fly" aria-label="Угол"><svg><use href="#i-ang"/></svg></button>
    <button class="tb" aria-label="Высота"><svg><use href="#i-lvl"/></svg></button>
    <button class="more" aria-label="Ещё"></button>
  </div>
</div>
<div class="toolrow">
  <div class="toolbar state">
    <span class="grip"></span>
    <button class="tb" aria-label="Шаг курсора"><svg><use href="#i-step"/></svg></button>
    <span class="combo step"><select aria-label="Шаг"><option>1.0</option></select><svg><use href="#i-down"/></svg></span><i class="sep"></i>
    <button class="tb" aria-label="Слои"><svg><use href="#i-layers"/></svg></button>
    <span class="combo layer off"><select aria-label="Слой" disabled><option></option></select><svg><use href="#i-down"/></svg></span><i class="sep"></i>
    <button class="tb navy" aria-label="Эскиз"><svg><use href="#i-sketch"/></svg></button><i class="sep"></i>
    <button class="tb" aria-label="Привязки"><svg><use href="#i-snap"/></svg></button>
    <button class="tb" aria-label="Запретить привязки"><svg><use href="#i-mag"/></svg></button><i class="sep"></i>
    <button class="tb" aria-label="Сетка"><svg><use href="#i-grid"/></svg></button><button class="dd dim" aria-label="Настройка сетки"></button><i class="sep"></i>
    <button class="tb" aria-label="Параметрический режим"><svg><use href="#i-orth"/></svg></button>
    <button class="tb" aria-label="Локальная система координат"><svg><use href="#i-lcs"/></svg></button><i class="sep"></i>
    <button class="tb" aria-label="Ортогональное черчение"><svg><use href="#i-ort"/></svg></button>
    <button class="tb on" aria-label="Округление"><svg><use href="#i-round"/></svg></button><i class="sep"></i>
    <button class="tb" aria-label="Координаты"><svg><use href="#i-xy"/></svg></button>
    <input class="coord" aria-label="Координата X" disabled><input class="coord" aria-label="Координата Y" disabled>
    <button class="more" aria-label="Ещё"></button>
  </div>
  <div class="toolbar geom">
    <span class="grip"></span>
    <button class="tb fly" aria-label="Точка"><svg><use href="#i-pt"/></svg></button>
    <button class="tb fly" aria-label="Прямая"><svg><use href="#i-ln"/></svg></button>
    <button class="tb fly" aria-label="Отрезок"><svg><use href="#i-seg"/></svg></button>
    <button class="tb fly" aria-label="Окружность"><svg><use href="#i-circ"/></svg></button>
    <button class="tb fly" aria-label="Дуга"><svg><use href="#i-arc"/></svg></button>
    <button class="tb fly" aria-label="Эллипс"><svg><use href="#i-ell"/></svg></button>
    <button class="tb" aria-label="Непрерывный ввод"><svg><use href="#i-nurb"/></svg></button>
    <button class="tb" aria-label="Мультилиния"><svg><use href="#i-multi"/></svg></button>
    <button class="tb fly" aria-label="Сплайн"><svg><use href="#i-spl"/></svg></button>
    <button class="tb fly" aria-label="Фаска"><svg><use href="#i-cham"/></svg></button>
    <button class="tb fly" aria-label="Скругление"><svg><use href="#i-fil"/></svg></button>
    <button class="tb fly" aria-label="Прямоугольник"><svg><use href="#i-rect"/></svg></button>
    <button class="tb fly" aria-label="Штриховка"><svg><use href="#i-hatch"/></svg></button>
    <button class="tb fly" aria-label="Собрать контур"><svg><use href="#i-eq"/></svg></button><i class="sep"></i>
    <button class="tb fly" aria-label="Проекция"><svg><use href="#i-proj"/></svg></button>
    <button class="more" aria-label="Ещё"></button>
  </div>
</div>
</div>

<main class="work">
  <aside class="compact">
    <span class="hgrip"></span>
    <button aria-label="Деталь"><svg><use href="#i-shade"/></svg></button>
    <button aria-label="Кривые"><svg><use href="#i-curve"/></svg></button>
    <button aria-label="Поверхности"><svg><use href="#i-surf"/></svg></button>
    <button aria-label="Вспомогательная геометрия"><svg><use href="#i-surf2"/></svg></button>
    <button class="cur" aria-label="Измерения"><svg><use href="#i-compass"/></svg></button>
    <button aria-label="Фильтры"><svg><use href="#i-filter"/></svg></button>
    <button aria-label="Спецификация"><svg><use href="#i-spec"/></svg></button>
    <i class="hsep"></i>
    <button class="big" aria-label="Расстояние"><svg><use href="#i-q1"/></svg></button>
    <button class="big" aria-label="Длина ребра"><svg><use href="#i-q2"/></svg></button>
    <button class="big" aria-label="Площадь"><svg><use href="#i-q3"/></svg></button>
    <button class="big" aria-label="МЦХ"><svg><use href="#i-solid"/></svg></button>
    <button class="big" aria-label="Проверка"><svg><use href="#i-q4"/></svg></button>
    <button class="tail" aria-label="Ещё"></button>
  </aside>

  <section class="side">
    <div class="panel">
      <div class="phead"><h2>Дерево модели</h2><button aria-label="Закрепить"><svg><use href="#i-pin"/></svg></button><button class="pclose" aria-label="Закрыть панель"><svg><use href="#i-x"/></svg></button></div>
      <div class="ptools">
        <button class="tb" aria-label="Дерево"><svg><use href="#i-tree"/></svg></button>
        <button class="tb" aria-label="Состав"><svg><use href="#i-list"/></svg></button><button class="dd dim" aria-label="Список состава"></button><i class="sep"></i>
        <button class="tb on" aria-label="Отношения"><svg><use href="#i-doc"/></svg></button>
        <button class="tb" aria-label="Дополнительное окно"><svg><use href="#i-docs"/></svg></button>
      </div>
      <div class="boxes">
        <div class="box top">
          <div class="scrolled">
            <div class="treeview">
              <div class="node root"><svg><use href="#i-root"/></svg><span>Деталь (Тел-2)</span></div>
              <ul>
                <li class="node exp"><svg><use href="#i-origin"/></svg><span>(т)Начало координат</span></li>
                <li class="node"><svg><use href="#i-plane"/></svg><span>Смещенная плоскост</span></li>
                <li class="node"><svg><use href="#i-plane"/></svg><span>Смещенная плоскост</span></li>
                <li class="node"><svg><use href="#i-plane"/></svg><span>Смещенная плоскост</span></li>
                <li class="node"><svg><use href="#i-plane"/></svg><span>Смещенная плоскост</span></li>
                <li class="node"><svg><use href="#i-plane"/></svg><span>Смещенная плоскост</span></li>
                <li class="node"><svg><use href="#i-plane"/></svg><span>Смещенная плоскост</span></li>
                <li class="node"><svg><use href="#i-plane"/></svg><span>Смещенная плоскост</span></li>
                <li class="node sel"><svg><use href="#i-plane"/></svg><span>Смещенная плоскос</span></li>
                <li class="node"><svg><use href="#i-sketch"/></svg><span>Эскиз:5</span></li>
                <li class="node"><svg><use href="#i-sketch"/></svg><span>Эскиз:6</span></li>
                <li class="node"><svg><use href="#i-ext"/></svg><span>Операция выдавливан</span></li>
                <li class="node"><svg><use href="#i-mir"/></svg><span>Зеркальное отражени</span></li>
                <li class="node used"><svg><use href="#i-sketch"/></svg><span>Эскиз:7</span></li>
                <li class="node"><svg><use href="#i-ext"/></svg><span>Операция выдавливан</span></li>
                <li class="node"><svg><use href="#i-mir"/></svg><span>Зеркальное отражени</span></li>
                <li class="node"><svg><use href="#i-mir"/></svg><span>Зеркальное отражени</span></li>
                <li class="node used"><svg><use href="#i-sketch"/></svg><span>Эскиз:10</span></li>
                <li class="node"><svg><use href="#i-plane"/></svg></li>
              </ul>
            </div>
            <div class="vscroll"><button class="flip" aria-label="Вверх"><svg><use href="#i-down"/></svg></button><i class="thumb"></i><i class="rest"></i><button aria-label="Вниз"><svg><use href="#i-down"/></svg></button></div>
          </div>
          <div class="hscroll"><button class="left" aria-label="Влево"><svg><use href="#i-down"/></svg></button><i class="thumb"></i><i class="rest"></i><button class="right" aria-label="Вправо"><svg><use href="#i-down"/></svg></button><i class="corner"></i></div>
        </div>
        <div class="box low">
          <div class="node root"><svg><use href="#i-plane2"/></svg><span>Смещенная плоскость:12</span></div>
          <ul class="short">
            <li class="node exp"><svg><use href="#i-folder"/></svg><span>Исходные объекты</span></li>
            <li class="node"><svg><use href="#i-folder"/></svg><span>Производные объекты</span></li>
          </ul>
        </div>
      </div>
    </div>
    <div class="tabs"><button>Построение</button></div>
  </section>

  <section class="viewport">
    <svg viewBox="240 105 1357 672" preserveAspectRatio="xMinYMin meet" role="img" aria-label="Модель: держатель карт">
      <g stroke="#151515" stroke-width="1" stroke-linejoin="round">
        <!-- back walls -->
        <path d="M754 200L757 192 767 179 786 167 800 164 813 165 917 187 930 300 900 440 783 420 780 200z" fill="#8a8a8a"/>
        <path d="M760 200L771 182 788 169 812 168 916 190 876 408 786 395z" fill="#6e6e6e"/>
        <path d="M968 199L1063 218 1063 222 1024 437 940 425z" fill="#6e6e6e"/>
        <path d="M968 197L1063 218V222L974 203z" fill="#8a8a8a"/>
        <path d="M1120 230L1204 249V252L1166 463 1093 450z" fill="#6e6e6e"/>
        <path d="M1120 230L1204 249V252L1126 235z" fill="#8a8a8a"/>
        <path d="M1264 260L1305 268 1322 277 1334 292 1339 318 1333 320 1304 484 1240 473z" fill="#6e6e6e"/>
        <path d="M1264 260L1305 268 1322 277 1334 292 1339 318H1336L1332 295 1320 281 1304 272 1270 265z" fill="#8a8a8a"/>
        <path d="M813 165V169M1305 268V272" fill="none"/>
        <!-- front panels -->
        <path d="M663 404L669 373 677 327 687 270 692 248 699 230 708 213 715 205 723 200H786L796 211 801 230 802 262 798 290 778 430z" fill="#9e9e9e"/>
        <path d="M717 204L725 203H786" fill="none"/>
        <path d="M917 187H951L961 199 966 213 969 235 969 255 966 277 940 424 876 408 916 190z" fill="#9e9e9e"/>
        <path d="M1063 219H1102L1112 227 1118 238 1123 262 1124 285 1120 307 1096 450 1024 437z" fill="#9e9e9e"/>
        <path d="M1204 249L1247 250 1257 257 1265 269 1270 292 1271 315 1268 337 1244 478 1166 463z" fill="#9e9e9e"/>
        <path d="M1333 318L1378 321 1389 328 1397 343 1403 362 1405 385 1402 407 1388 502 1304 484z" fill="#9e9e9e"/>
        <path d="M916 190H951M1063 222H1101M1204 252H1246M1333 321L1377 324" fill="none"/>
        <!-- underside -->
        <g stroke="none">
          <path d="M786 398L938 424 934 456 870 443 783 429z" fill="#777"/>
          <path d="M788 402L936 428 870 437 784 424z" fill="#525252"/>
          <path d="M870 437L934 429V457L869 442z" fill="#9e9e9e"/>
          <path d="M944 425L1094 452 1088 484 1017 469 941 457z" fill="#777"/>
          <path d="M945 430L988 438 1010 446 1091 456 1017 463 943 450z" fill="#525252"/>
          <path d="M1018 463L1091 457 1087 484 1017 469z" fill="#9e9e9e"/>
          <path d="M1098 453L1244 478 1237 511 1160 494 1096 484z" fill="#777"/>
          <path d="M1099 459L1146 468 1168 475 1242 482 1161 489 1097 478z" fill="#525252"/>
          <path d="M1161 488L1241 483 1236 511 1160 494z" fill="#9e9e9e"/>
          <path d="M1248 480L1386 506 1378 535 1297 518 1246 510z" fill="#777"/>
          <path d="M1249 486L1384 509 1298 514 1247 504z" fill="#525252"/>
          <path d="M1298 513L1384 510 1379 535 1297 518z" fill="#9e9e9e"/>
        </g>
        <path d="M663 404L783 429 870 443 936 457 1017 469 1088 484 1160 494 1236 511 1297 518 1380 536M870 437V442M1018 463V469M1161 488V494M1298 513V518" fill="none"/>
        <!-- rails -->
        <path d="M788 391L939 417 937 428 786 402z" fill="#555"/>
        <path d="M788 394L938 420M787 399L938 425" stroke="#999" fill="none"/>
        <path d="M787 396L938 422" fill="none"/>
        <path d="M946 419L990 426 994 432 1055 440 1097 447 1095 456 1054 450 1005 444 988 438 944 430z" fill="#606060"/>
        <path d="M946 422L990 429M1055 443L1096 450" stroke="#999" fill="none"/>
        <path d="M993 436Q1020 442 1054 443" stroke="#c8c8c8" stroke-width="2" fill="none"/>
        <path d="M945 426L988 434 992 438 1054 446 1095 453M1055 440V450M992 431V438" fill="none"/>
        <path d="M1100 448L1148 456 1153 462 1212 468 1246 474 1243 482 1211 477 1165 472 1146 467 1099 459z" fill="#606060"/>
        <path d="M1101 451L1148 459M1212 471L1245 477" stroke="#999" fill="none"/>
        <path d="M1152 465Q1180 471 1212 471" stroke="#c8c8c8" stroke-width="2" fill="none"/>
        <path d="M1100 455L1148 463 1153 468 1211 473 1244 479M1212 468V477M1152 461V468" fill="none"/>
        <path d="M1248 475L1392 500 1390 511 1246 485z" fill="#666"/>
        <path d="M1248 478L1391 504" stroke="#999" fill="none"/><path d="M1247 481L1391 507" fill="none"/>
        <path d="M669 374L716 405 778 395M669 377L716 408 778 398" fill="none"/>
        <!-- ribs: shadow side, then lit rim -->
        <path d="M784 200L792 199 803 208 808 220 811 237 811 275 807 292 783 430 773 428 797 290 801 262 800 230 795 212z" fill="#484848"/>
        <path d="M785 200L794 203 802 218 805 240 806 265 803 291 777 429 773 428 797 290 801 262 800 230 795 212z" fill="url(#g-rim)"/>
        <path d="M808 240L808 262 805 291 780 429M811 275L807 292 787 404" fill="none" stroke-dasharray="5 1"/><path d="M797 290L807 292"/>
        <path d="M950 188L955 188 968 197 975 211 978 232 978 257 974 278 943 459 933 457 965 276 968 255 968 235 965 213 960 200z" fill="#484848"/>
        <path d="M950 189L959 192 969 208 973 230 973 255 970 277 937 458 933 457 939 420 965 276 968 255 968 235 965 213 960 200z" fill="url(#g-rim)"/>
        <path d="M976 230V255L972 277 940 458" fill="none"/><path d="M965 276L975 277"/>
        <path d="M1101 219L1106 219 1119 228 1128 247 1132 275 1129 308 1098 486 1087 484 1119 306 1123 285 1122 262 1117 239 1111 228z" fill="#484848"/>
        <path d="M1101 220L1110 223 1121 238 1127 262 1127 285 1124 307 1091 485 1087 484 1119 306 1123 285 1122 262 1117 239 1111 228z" fill="url(#g-rim)"/>
        <path d="M1127 255L1130 280 1126 307 1094 485" fill="none"/><path d="M1119 306L1130 308"/>
        <path d="M1246 250L1251 249 1264 257 1275 277 1280 300 1277 338 1246 512 1235 511 1267 336 1270 315 1269 292 1264 270 1256 258z" fill="#484848"/>
        <path d="M1246 250L1255 253 1267 269 1274 292 1274 315 1272 337 1239 512 1235 511 1267 336 1270 315 1269 292 1264 270 1256 258z" fill="url(#g-rim)"/>
        <path d="M1274 283L1278 305 1275 337 1242 512" fill="none"/><path d="M1267 336L1278 338"/>
        <path d="M1377 321L1393 325 1405 340 1413 363 1414 385 1411 410 1389 537 1378 535 1401 407 1404 385 1402 362 1396 344 1388 329z" fill="#484848"/>
        <path d="M1377 321L1388 324 1400 339 1407 362 1409 384 1407 408 1382 536 1378 535 1401 407 1404 385 1402 362 1396 344 1388 329z" fill="url(#g-rim)"/>
        <path d="M1406 350L1411 366 1412 385 1409 409 1385 536" fill="none"/><path d="M1401 407L1412 410"/>
      </g>
      <g fill="none">
        <path d="M728 361L838 381 817 495 707 477z" stroke="#2d87d8" stroke-width="1.300"/>
        <path d="M765 368L802 374 781 492 744 481z" stroke="#f08a8e" stroke-width="1.300"/>
        <path d="M701 415L847 443M773 430L766 464" stroke="#7df02f" stroke-width="1.500"/>
        <path d="M735 421L772 428" stroke="#e0a626" stroke-width="1.500"/>
        <path d="M714 409v15M707 414l14 3M724 409v17M716 416l18 3M1339 309v16M1333 318h14" stroke="#e620e6" stroke-width="1.300"/>
        <path d="M1368 480L1422 489 1403 597 1349 583z" stroke="#12e81c" stroke-width="2"/>
      </g>
      <g>
        <path d="M1364 474h9v9h-9z" fill="#2b4a82"/><path d="M1392 480h7v8h-7z" fill="#e8d8f0"/><path d="M1419 485h8v8h-8z" fill="#111"/><path d="M1355 528h8v8h-8z" fill="#3b3d80"/><path d="M1381 533h8v7h-8z" fill="#ddd"/><path d="M1380 538h8v3h-8z" fill="#9a3d20"/><path d="M1408 540h8v7h-8zM1344 579h9v8h-9zM1372 586h8v8h-8zM1399 593h8v8h-8z" fill="#6b3520"/>
        <path d="M1367 481l5-2M1391 484l7 1M1419 491l5-3M1355 530l7 4M1409 543h7M1346 584l6-2M1373 590l7 1M1400 595l6 1" stroke="#c32ec8" stroke-width="1.500"/>
      </g>
      <g class="axes">
        <path d="M288 729L274 726" stroke="#c41010" stroke-width="3"/><path d="M259 724L275 722 273 729z" fill="#c41010"/>
        <path d="M288 729L283 750" stroke="#12b81c" stroke-width="3"/><path d="M282 761L281 746 288 749z" fill="#12b81c"/>
        <path d="M287 729h7" stroke="#1b8ad0" stroke-width="4"/><path d="M301 732L292 726 292 734z" fill="#1b8ad0"/>
        <text x="248" y="728" fill="#e0252a">X</text><text x="299" y="737" fill="#2d95dd">Z</text><text x="277" y="772" fill="#25d530">Y</text>
      </g>
    </svg>
  </section>
</main>

<section class="propbar"><span class="vgrip"></span><div class="propbox"></div></section>
<footer class="status"><span>Щелкните левой кнопкой мыши на объекте для его выделения (вместе с Ctrl - добавить к выделенным)</span><i></i></footer>
<footer class="taskbar">
  <button class="first" aria-label="Пуск"><svg><use href="#i-win"/></svg></button>
  <button class="find" aria-label="Поиск"><svg><use href="#i-search"/></svg></button>
  <button class="run" aria-label="Проводник"><svg><use href="#i-exp"/></svg></button>
  <button class="run" aria-label="Firefox"><svg><use href="#i-ff"/></svg></button>
  <button aria-label="Приложение"><svg><use href="#i-red"/></svg></button>
  <button class="run act" aria-label="КОМПАС-3D"><svg><use href="#i-kompas"/></svg></button>
  <button class="run" aria-label="Viber"><svg><use href="#i-viber"/></svg></button>
  <div class="tray">
    <button aria-label="Скрытые значки"><svg><use href="#i-up"/></svg></button>
    <button aria-label="Сеть"><svg><use href="#i-wifi"/></svg></button>
    <button aria-label="Батарея"><svg><use href="#i-bat"/></svg></button>
    <button aria-label="Громкость"><svg><use href="#i-vol"/></svg></button>
    <button class="lang">РУС</button><time>22:12</time>
    <button class="note" aria-label="Уведомления"><svg><use href="#i-note"/></svg></button>
    <button class="desk" aria-label="Рабочий стол"></button>
  </div>
</footer>
</body>
</html>
```
FILE: styles.css
```css
* { box-sizing: border-box; }
html, body { height: 100%; margin: 0; }
body { display: flex; flex-direction: column; background: #525252; font: 12px/16px "Noto Sans", "Open Sans", sans-serif; color: #222; overflow: hidden; }
.defs { position: absolute; width: 0; height: 0; }
button { font: inherit; color: inherit; background: none; border: 0; padding: 0; margin: 0; display: flex; align-items: center; justify-content: center; flex: none; }
h1, h2 { margin: 0; font-size: 12px; font-weight: 400; }
ul { list-style: none; margin: 0; padding: 0; }

.titlebar { display: flex; align-items: center; height: 24px; background: #fff; color: #000; flex: none; padding-left: 1px; }
.titlebar .ico { width: 17px; height: 17px; margin-right: 5px; }
.winbtns { display: flex; margin-left: auto; }
.winbtns button { width: 49px; height: 24px; }
.winbtns button:last-child { width: 52px; }
.winbtns svg { width: 12px; height: 12px; }

.menubar { display: flex; align-items: center; height: 25px; color: #e6e6e6; flex: none; padding-left: 5px; gap: 16px; }
.menubar .ico { width: 16px; height: 16px; margin: 0 -6px 0 -14px; }
.menubar .grip { width: 4px; height: 11px; margin: 0; }
.menubar u { text-underline-offset: 2px; }
.docbtns { display: flex; margin-left: auto; color: #8f949c; margin-top: 6px; padding-right: 2px; }
.docbtns button { width: 17px; }
.docbtns svg { width: 9px; height: 9px; stroke-width: 2; }

.tools { flex: none; display: flex; flex-direction: column; gap: 1px; padding-top: 1px; border-bottom: 2px solid #8c8f94; }
.toolrow { display: flex; height: 26px; gap: 0; }
.toolbar { display: flex; align-items: center; height: 26px; border-radius: 3px; background: linear-gradient(#cfd1d6, #c0c3ca 60%, #aaaeb6); border-bottom: 1px solid #6e7177; }
.grip { flex: none; width: 3px; height: 17px; margin: 0 5px 0 4px; background: radial-gradient(circle at 1px 1px, #4a4a4a 1px, transparent 2px) 0 0 / 3px 4px; }
.menubar .grip, .vgrip { background: radial-gradient(circle at 1px 1px, #e0e0e0 1px, transparent 2px) 0 0 / 3px 4px; }
.tb { position: relative; width: 23px; height: 22px; }
.tb svg { width: 17px; height: 17px; overflow: visible; }
.tb.on { background: linear-gradient(#fbd9a4, #ffb95c 50%, #fff0b8); outline: 1px solid #f3d79c; outline-offset: -2px; }
.tb.navy { color: #1c1c9e; }
.tb.fx { font-size: 12px; color: #4a4a4a; }
.tb.fly::after { content: ""; position: absolute; right: 0; bottom: 2px; border: 2px solid #6a6c70; border-left-color: transparent; border-top-color: transparent; }
.dd { width: 11px; height: 22px; }
.dd::before { content: ""; border: 3px solid transparent; border-top: 4px solid #111; border-bottom: 0; }
.dd.dim::before { border-top-color: #777; }
.state .dd { width: 13px; }
.sep { flex: none; width: 2px; height: 15px; margin: 0 3px; background: linear-gradient(90deg, #7d8087 50%, #f0f0f2 50%); }
.more { align-self: stretch; width: 10px; margin-left: 4px; background: linear-gradient(#a4a7ae, #4c4e53); border-radius: 0 3px 3px 0; align-items: flex-end; padding-bottom: 3px; }
.more::before { content: ""; width: 7px; height: 6px; background: linear-gradient(#fff 1px, transparent 1px, transparent 2px, #000 2px); clip-path: polygon(0 0, 100% 0, 100% 2px, 50% 100%, 0 2px); }
.view { margin-left: 32px; }
.view .sep { margin: 0 4px 0 3px; }
.view .dd { width: 12px; }
.view .more { margin-left: 11px; }
.dims { margin-left: 3px; }
.dims .grip { margin: 0 2px 0 3px; }
.geom .grip { margin-right: 3px; }
.combo { display: flex; align-items: center; position: relative; height: 20px; background: #fff; border: 1px solid #b9bbc0; }
.combo select { appearance: none; flex: 1; min-width: 0; height: 18px; border: 0; background: transparent; font: 13px/18px "Noto Sans", sans-serif; color: #222; padding: 0 0 0 3px; }
.combo svg { flex: none; width: 16px; height: 18px; padding: 3px; background: #e6e6e6; border-left: 1px solid #ccc; color: #555; pointer-events: none; }
.combo.zoom { width: 67px; }
.combo.step { width: 60px; margin-right: 3px; }
.combo.layer { width: 86px; margin: 0 2px 0 0; }
.state .combo + .sep { margin-right: 4px; }
.combo.off { background: #ededed; }
.combo.off svg { color: #bbb; }
.coord { width: 50px; height: 20px; border: 1px solid #c9cbcf; background: #efefef; padding: 0; margin: 0 1px; }
.geom .more { margin-left: 3px; }

.work { flex: 1; min-height: 0; display: flex; }
.compact { flex: none; width: 26px; align-self: flex-start; display: flex; flex-direction: column; align-items: stretch; margin: 2px 1px 0 0; padding-top: 4px; border-radius: 3px; background: linear-gradient(90deg, #cdd0d5, #b9bcc3 60%, #a4a8b0); }
.hgrip { height: 3px; margin: 0 5px 3px; background: radial-gradient(circle at 1px 1px, #4a4a4a 1px, transparent 2px) 0 0 / 4px 3px; }
.compact button { height: 18px; padding-left: 6px; }
.compact button svg { width: 14px; height: 14px; }
.compact button.cur svg { background: #e4e4e4; outline: 1px solid #eee; }
.compact .big { height: 23px; padding: 0; }
.compact .big svg { width: 19px; height: 19px; }
.hsep { height: 2px; margin: 4px 5px 2px; background: linear-gradient(#7d8087 50%, #f0f0f2 50%); }
.compact .tail { height: 12px; justify-content: flex-end; padding: 0 3px 0 0; background: linear-gradient(90deg, #a9acb3, #4c4e53); border-radius: 0 0 3px 3px; }
.tail::before { content: ""; border: 3px solid transparent; border-left: 4px solid #000; border-right: 0; }

.side { flex: none; width: 208px; margin-right: 4px; display: flex; flex-direction: column; }
.panel { flex: 1; min-height: 0; display: flex; flex-direction: column; border-bottom: 1px solid #222; }
.phead { display: flex; align-items: center; height: 19px; padding: 0 6px 0 4px; background: #becedd; flex: none; }
.phead h2 { margin-right: auto; color: #333; }
.phead svg { width: 9px; height: 9px; }
.phead .pclose { margin-left: 9px; }
.phead .pclose svg { stroke-width: 2; }
.ptools { display: flex; align-items: center; height: 26px; padding-left: 1px; background: linear-gradient(#cdd0d5, #b4b8c0 60%, #a0a4ad); flex: none; }
.ptools .tb { width: 24px; }
.boxes { flex: 1; min-height: 0; display: flex; flex-direction: column; gap: 2px; padding: 4px; background: #ebebeb; }
.box { background: #fff; border: 1px solid #9a9a9a; overflow: hidden; min-height: 0; display: flex; flex-direction: column; }
.top { flex: 423 1 0; }
.low { flex: 174 1 0; }
.scrolled { flex: 1; min-height: 0; display: flex; overflow: hidden; }
.treeview { flex: 1; min-width: 0; overflow: hidden; }
.node { position: relative; display: flex; align-items: center; height: 21px; white-space: nowrap; color: #707070; }
.node > svg { flex: none; width: 17px; height: 17px; margin-right: 7px; overflow: visible; }
.node span { color: #222; }
.root { padding-left: 6px; margin-top: 1px; }
ul .node { margin-left: 15px; border-left: 1px dotted #999; }
ul .node::before { content: ""; width: 14px; border-top: 1px dotted #999; flex: none; }
.short .node:last-child::after { content: ""; position: absolute; left: -1px; top: 11px; width: 1px; height: 10px; background: #fff; }
.exp::after { content: ""; position: absolute; left: -5px; top: 6px; width: 9px; height: 9px; border: 1px solid #8a8a8a; background: linear-gradient(#2b4aa8, #2b4aa8) 1px 3px / 5px 1px no-repeat, linear-gradient(#2b4aa8, #2b4aa8) 3px 1px / 1px 5px no-repeat, #fff; }
.sel { color: #12e012; font-weight: 700; }
.sel span { background: #f0f0f0; line-height: 20px; flex: 1; color: #111; }
.used { color: #1c2c80; }
.low .root { margin-top: -1px; }
.vscroll { flex: none; width: 17px; display: flex; flex-direction: column; background: #f0f0f0; color: #444; }
.vscroll button { height: 20px; }
.vscroll svg, .hscroll svg { width: 9px; height: 9px; stroke-width: 2; }
.flip svg { transform: rotate(180deg); }
.left svg { transform: rotate(90deg); }
.right svg { transform: rotate(-90deg); }
.thumb { background: #cdcdcd; }
.vscroll .thumb { flex: 223 1 0; margin-right: 1px; }
.vscroll .rest { flex: 140 1 0; }
.hscroll { flex: none; display: flex; height: 16px; background: #f0f0f0; color: #444; }
.hscroll button { width: 18px; }
.hscroll .thumb { flex: 100 1 0; margin-bottom: 1px; }
.hscroll .rest { flex: 44 1 0; }
.hscroll .corner { width: 17px; }
.tabs { height: 21px; flex: none; padding-left: 4px; }
.tabs button { height: 18px; width: 80px; background: linear-gradient(#cdd3dc, #f2f5f7); border-radius: 0 0 4px 4px; }

.viewport { flex: 1; min-width: 0; margin: 0 2px 0 0; border-left: 1px solid #aaa; border-bottom: 1px solid #eee; background: linear-gradient(#68a5e2, #fff); overflow: hidden; }
.viewport svg { display: block; width: 100%; height: 100%; }
.axes text { font: 12px "Liberation Mono", monospace; }

.propbar { flex: none; display: flex; align-items: flex-start; height: 70px; padding: 8px 6px 0 28px; }
.vgrip { width: 3px; height: 60px; margin: -3px 2px 0 0; }
.propbox { flex: 1; height: 36px; border: 4px solid #ebebec; border-bottom-width: 2px; outline: 1px solid #888; outline-offset: -1px; background: linear-gradient(#cdd0d5, #c8cbd1 40%, #b4b7be); box-shadow: 0 1px #222; }
.status { flex: none; display: flex; align-items: center; height: 20px; padding: 5px 0 0 6px; color: #e4e4e4; background: linear-gradient(#3d424f 8px, #2e2e2d 8px); }
.status span { flex: 1; min-width: 0; white-space: nowrap; }
.status i { width: 1px; height: 14px; margin-right: 88px; background: #777; }
.taskbar { flex: none; display: flex; height: 32px; color: #fff; background: linear-gradient(90deg, #330b3a, #4a132f 8%, #4e262e 20%, #42292e 36%, #302640 52%, #38123a 60%, #301848 72%, #2b1650 80%, #330d40 88%, #300d50); }
.taskbar button { width: 38px; padding-bottom: 2px; }
.taskbar svg { width: 17px; height: 17px; }
.taskbar .first { width: 36px; }
.taskbar .find { margin-right: 4px; }
.run { background: linear-gradient(#e49ae6, #e49ae6) center bottom / 29px 3px no-repeat; }
.taskbar .act { background: linear-gradient(#e49ae6, #e49ae6) center bottom / 100% 3px no-repeat, #691668; }
.tray { margin-left: auto; display: flex; align-items: center; }
.tray button { width: 25px; height: 32px; padding: 0; }
.tray svg { width: 15px; height: 15px; }
.tray .lang { width: 36px; }
.tray time { width: 46px; text-align: center; }
.tray .note { width: 38px; margin-right: 11px; }
.tray .note svg { width: 18px; height: 18px; }
.tray .desk { width: 5px; border-left: 1px solid #8a7a98; }
```
